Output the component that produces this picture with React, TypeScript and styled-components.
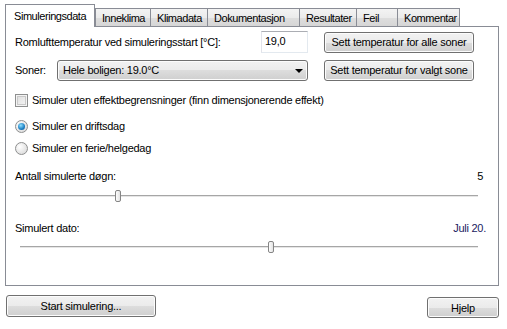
import styled, { createGlobalStyle } from 'styled-components';

const GlobalStyle = createGlobalStyle`
  html, body {
    margin: 0;
    padding: 0;
    background: #ffffff;
  }
  body {
    font-family: "Liberation Sans", Arial, sans-serif;
    font-size: 11px;
    letter-spacing: -0.25px;
    color: #000000;
  }
`;

const tabs = [
  { label: 'Simuleringsdata', width: 90 },
  { label: 'Inneklima', width: 56 },
  { label: 'Klimadata', width: 58 },
  { label: 'Dokumentasjon', width: 93 },
  { label: 'Resultater', width: 58 },
  { label: 'Feil', width: 42 },
  { label: 'Kommentar', width: 63 },
];

const Slider = ({ value, min, max }: { value: number; min: number; max: number }) => {
  const frac = (value - min) / (max - min);
  return (
    <SliderRow>
      <Track />
      <Thumb style={{ left: `calc(${frac} * (100% - 6px))` }} />
    </SliderRow>
  );
};

const App = () => {
  return (
    <>
      <GlobalStyle />
      <Window>
        <TabStrip>
          {tabs.map((t, i) => (
            <Tab key={t.label} $active={i === 0} $w={t.width}>
              {t.label}
            </Tab>
          ))}
        </TabStrip>
        <Panel>
          <FieldRow>
            <FieldLabel>Romlufttemperatur ved simuleringsstart [°C]:</FieldLabel>
            <TextInput>19,0</TextInput>
            <Button $w={150}>Sett temperatur for alle soner</Button>
          </FieldRow>
          <FieldRow $top={6}>
            <ShortLabel>Soner:</ShortLabel>
            <Combo>
              Hele boligen: 19.0°C
              <Arrow />
            </Combo>
            <Button $w={150}>Sett temperatur for valgt sone</Button>
          </FieldRow>
          <OptionRow $top={11}>
            <CheckBox />
            Simuler uten effektbegrensninger (finn dimensjonerende effekt)
          </OptionRow>
          <OptionRow $top={10}>
            <Radio $checked />
            Simuler en driftsdag
          </OptionRow>
          <OptionRow $top={6}>
            <Radio />
            Simuler en ferie/helgedag
          </OptionRow>
          <ValueRow $top={12}>
            <span>Antall simulerte døgn:</span>
            <Value>5</Value>
          </ValueRow>
          <SliderWrap $top={4}>
            <Slider value={5} min={1} max={20} />
          </SliderWrap>
          <ValueRow $top={16}>
            <span>Simulert dato:</span>
            <Value $blue>Juli 20.</Value>
          </ValueRow>
          <SliderWrap $top={3}>
            <Slider value={201} min={1} max={365} />
          </SliderWrap>
        </Panel>
        <Footer>
          <Button $w={150} $h={22}>Start simulering...</Button>
          <HelpButton $w={72} $h={21}>Hjelp</HelpButton>
        </Footer>
      </Window>
    </>
  );
};

export default App;

const Window = styled.div`
  width: 507px;
  height: 329px;
  box-sizing: border-box;
  padding: 4px 8px 0 5px;
  background: #ffffff;
  overflow: hidden;
`;

const TabStrip = styled.div`
  position: relative;
  z-index: 1;
  display: flex;
  align-items: flex-end;
  height: 23px;
  margin-bottom: -1px;
`;

const Tab = styled.div<{ $active?: boolean; $w: number }>`
  box-sizing: border-box;
  width: ${({ $w }) => $w}px;
  height: ${({ $active }) => ($active ? 23 : 19)}px;
  margin-left: ${({ $active }) => ($active ? 0 : -1)}px;
  padding-left: ${({ $active }) => ($active ? 8 : 6)}px;
  padding-bottom: ${({ $active }) => ($active ? 1 : 0)}px;
  display: flex;
  align-items: center;
  border: 1px solid #898c95;
  border-bottom: ${({ $active }) => ($active ? 'none' : '1px solid #898c95')};
  background: ${({ $active }) =>
    $active ? '#ffffff' : 'linear-gradient(#f3f3f3, #ebebeb 50%, #dedede 50%, #d6d6d6)'};
  letter-spacing: -0.45px;
  white-space: nowrap;
  overflow: hidden;
  &:first-child + & {
    margin-left: 0;
  }
`;

const Panel = styled.div`
  box-sizing: border-box;
  height: 260px;
  border: 1px solid #898c95;
  background: #ffffff;
  padding: 4px 14px 0 9px;
  display: flex;
  flex-direction: column;
`;

const FieldRow = styled.div<{ $top?: number }>`
  display: flex;
  align-items: center;
  height: 22px;
  margin-top: ${({ $top }) => $top ?? 0}px;
  margin-right: 10px;
`;

const FieldLabel = styled.span`
  flex: 1;
`;

const ShortLabel = styled.span`
  width: 42px;
`;

const TextInput = styled.div`
  box-sizing: border-box;
  width: 47px;
  height: 22px;
  border: 1px solid #abadb3;
  border-right-color: #e3e9ef;
  border-bottom-color: #e3e9ef;
  border-left-color: #e2e3ea;
  padding: 3px 0 0 3px;
  background: #ffffff;
`;

const Button = styled.div<{ $w: number; $h?: number }>`
  box-sizing: border-box;
  width: ${({ $w }) => $w}px;
  height: ${({ $h }) => $h ?? 21}px;
  margin-left: 16px;
  display: flex;
  align-items: center;
  justify-content: center;
  border: 1px solid #707070;
  border-radius: 3px;
  background: linear-gradient(#f2f2f2, #ebebeb 50%, #dddddd 50%, #cfcfcf);
  box-shadow: inset 0 0 0 1px #fcfcfc;
  white-space: nowrap;
`;

const Combo = styled.div`
  position: relative;
  box-sizing: border-box;
  width: 251px;
  height: 21px;
  display: flex;
  align-items: center;
  padding-left: 5px;
  border: 1px solid #707070;
  border-radius: 3px;
  background: linear-gradient(#f2f2f2, #ebebeb 50%, #dddddd 50%, #cfcfcf);
  box-shadow: inset 0 0 0 1px #fcfcfc;
`;

const Arrow = styled.span`
  position: absolute;
  right: 4px;
  top: 8px;
  width: 0;
  height: 0;
  border-left: 4px solid transparent;
  border-right: 4px solid transparent;
  border-top: 4px solid #000000;
`;

const OptionRow = styled.label<{ $top?: number }>`
  display: flex;
  align-items: center;
  gap: 4px;
  height: 16px;
  margin-top: ${({ $top }) => $top ?? 0}px;
`;

const CheckBox = styled.span`
  box-sizing: border-box;
  width: 13px;
  height: 13px;
  border: 1px solid #8e8f8f;
  background: linear-gradient(135deg, #dcdcdc, #f7f7f7);
  box-shadow: inset 0 0 0 1px #f4f4f4, inset 0 0 0 2px #c9c9c9;
`;

const Radio = styled.span<{ $checked?: boolean }>`
  position: relative;
  box-sizing: border-box;
  width: 13px;
  height: 13px;
  border-radius: 50%;
  border: 1px solid #8e8f8f;
  background: radial-gradient(circle at 35% 35%, #ffffff, #d4d4d4);
  &::after {
    content: '';
    display: ${({ $checked }) => ($checked ? 'block' : 'none')};
    position: absolute;
    left: 2px;
    top: 2px;
    width: 7px;
    height: 7px;
    border-radius: 50%;
    background: radial-gradient(circle at 40% 35%, #8fe0ff, #1b7ec2 60%, #0d4f8c);
  }
`;

const ValueRow = styled.div<{ $top?: number }>`
  display: flex;
  justify-content: space-between;
  align-items: center;
  height: 16px;
  margin-top: ${({ $top }) => $top ?? 0}px;
`;

const Value = styled.span<{ $blue?: boolean }>`
  color: ${({ $blue }) => ($blue ? '#1a1a5e' : '#000000')};
  margin-right: ${({ $blue }) => ($blue ? -2 : 1)}px;
`;

const SliderWrap = styled.div<{ $top?: number }>`
  margin: ${({ $top }) => $top ?? 0}px 6px 0 5px;
`;

const SliderRow = styled.div`
  position: relative;
  height: 16px;
`;

const Track = styled.div`
  position: absolute;
  left: 0;
  right: 0;
  top: 7px;
  height: 1px;
  background: #a6a6a6;
  border-bottom: 1px solid #e6e6e6;
`;

const Thumb = styled.div`
  position: absolute;
  top: 2px;
  box-sizing: border-box;
  width: 6px;
  height: 12px;
  border: 1px solid #858585;
  border-radius: 2px;
  background: linear-gradient(90deg, #fdfdfd, #e3e3e3);
`;

const Footer = styled.div`
  display: flex;
  justify-content: space-between;
  align-items: flex-start;
  margin-top: 9px;
  padding-left: 1px;
  & > * {
    margin-left: 0;
  }
`;

const HelpButton = styled(Button)`
  margin-top: 2px;
`;
